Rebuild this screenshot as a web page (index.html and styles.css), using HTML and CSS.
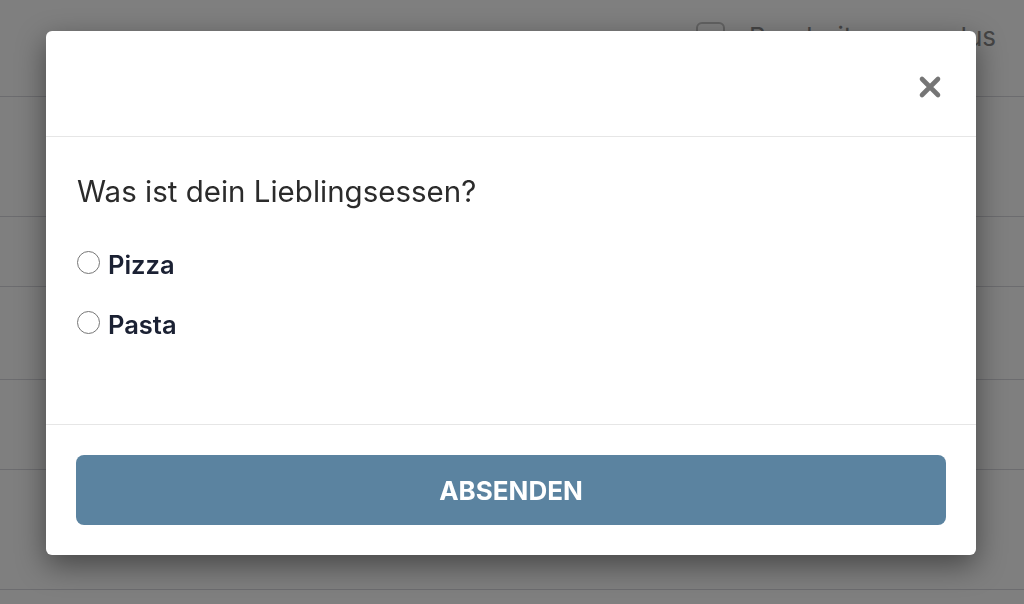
FILE: index.html
```html
<!DOCTYPE html>
<html lang="de">
<head>
<meta charset="utf-8">
<title>Umfrage</title>
<link rel="stylesheet" href="styles.css">
</head>
<body>
<div class="page">
  <div class="topbar">
    <label class="mode"><span class="check"></span><span class="mode-text">Bearbeitungsmodus</span></label>
  </div>
  <div class="row r1"></div>
  <div class="row r2"></div>
  <div class="row r3"></div>
  <div class="row r4"></div>
  <div class="row r5"></div>
</div>
<div class="overlay"></div>
<div class="modal">
  <div class="modal-header">
    <button class="close" aria-label="Schließen">
      <svg width="24" height="24" viewBox="0 0 24 24"><path d="M4 4 L20 20 M20 4 L4 20" stroke="#757575" stroke-width="4.6" stroke-linecap="round"/></svg>
    </button>
  </div>
  <div class="modal-body">
    <p class="question">Was ist dein Lieblingsessen?</p>
    <label class="option"><span class="radio"></span><span>Pizza</span></label>
    <label class="option"><span class="radio"></span><span>Pasta</span></label>
  </div>
  <div class="modal-footer">
    <button class="submit">ABSENDEN</button>
  </div>
</div>
</body>
</html>
```
FILE: styles.css
```css
* { box-sizing: border-box; }
html, body { margin: 0; height: 100%; }
body {
  font-family: Inter, "Liberation Sans", sans-serif;
  background: #ffffff;
  overflow: hidden;
}
.page { width: 1024px; }
.topbar {
  height: 97px;
  border-bottom: 1px solid #d8d8de;
  display: flex;
  justify-content: flex-end;
  padding: 20px 28px 0 0;
}
.mode { display: flex; align-items: flex-start; gap: 24px; }
.check {
  width: 29px; height: 29px;
  border: 2px solid #c4c4c4;
  border-radius: 6px;
  margin-top: 2px;
}
.mode-text { font-size: 26px; color: #8a8a8a; line-height: 34px; }
.row { border-bottom: 1px solid #d8d8de; }
.r1 { height: 120px; }
.r2 { height: 70px; }
.r3 { height: 93px; }
.r4 { height: 90px; }
.r5 { height: 120px; }
.overlay {
  position: fixed; inset: 0;
  background: rgba(0,0,0,0.5);
}
.modal {
  position: absolute;
  left: 46px; top: 31px;
  width: 930px;
  height: 524px;
  background: #fff;
  border-radius: 6px;
  box-shadow: 0 10px 30px rgba(0,0,0,0.45);
  display: flex;
  flex-direction: column;
}
.modal-header {
  height: 106px;
  border-bottom: 1px solid #e6e6e6;
  display: flex;
  justify-content: flex-end;
  align-items: flex-start;
  padding: 44px 34px 0 0;
}
.close {
  border: 0; background: none; padding: 0; margin: 0;
  width: 24px; height: 24px; display: block;
}
.close svg { display: block; }
.modal-body {
  flex: 1;
  padding: 36px 30px 0 31px;
}
.question {
  margin: 0 0 40px 0;
  font-size: 29.5px;
  line-height: 36px;
  color: #2b2b2b;
  font-weight: 400;
}
.option {
  display: flex;
  align-items: center;
  gap: 8px;
  font-size: 25.5px;
  font-weight: 600;
  color: #1b2133;
  height: 30px;
  margin-bottom: 30px;
}
.radio {
  width: 23px; height: 23px;
  border: 1.5px solid #767676;
  border-radius: 50%;
  margin-top: -4px;
}
.modal-footer {
  border-top: 1px solid #e6e6e6;
  padding: 30px 30px 30px 30px;
}
.submit {
  display: block;
  width: 100%;
  height: 70px;
  border: 0;
  border-radius: 8px;
  background: #5b83a0;
  color: #fff;
  font-family: Inter, "Liberation Sans", sans-serif;
  font-size: 26px;
  font-weight: 700;
  letter-spacing: 0;
}
```
